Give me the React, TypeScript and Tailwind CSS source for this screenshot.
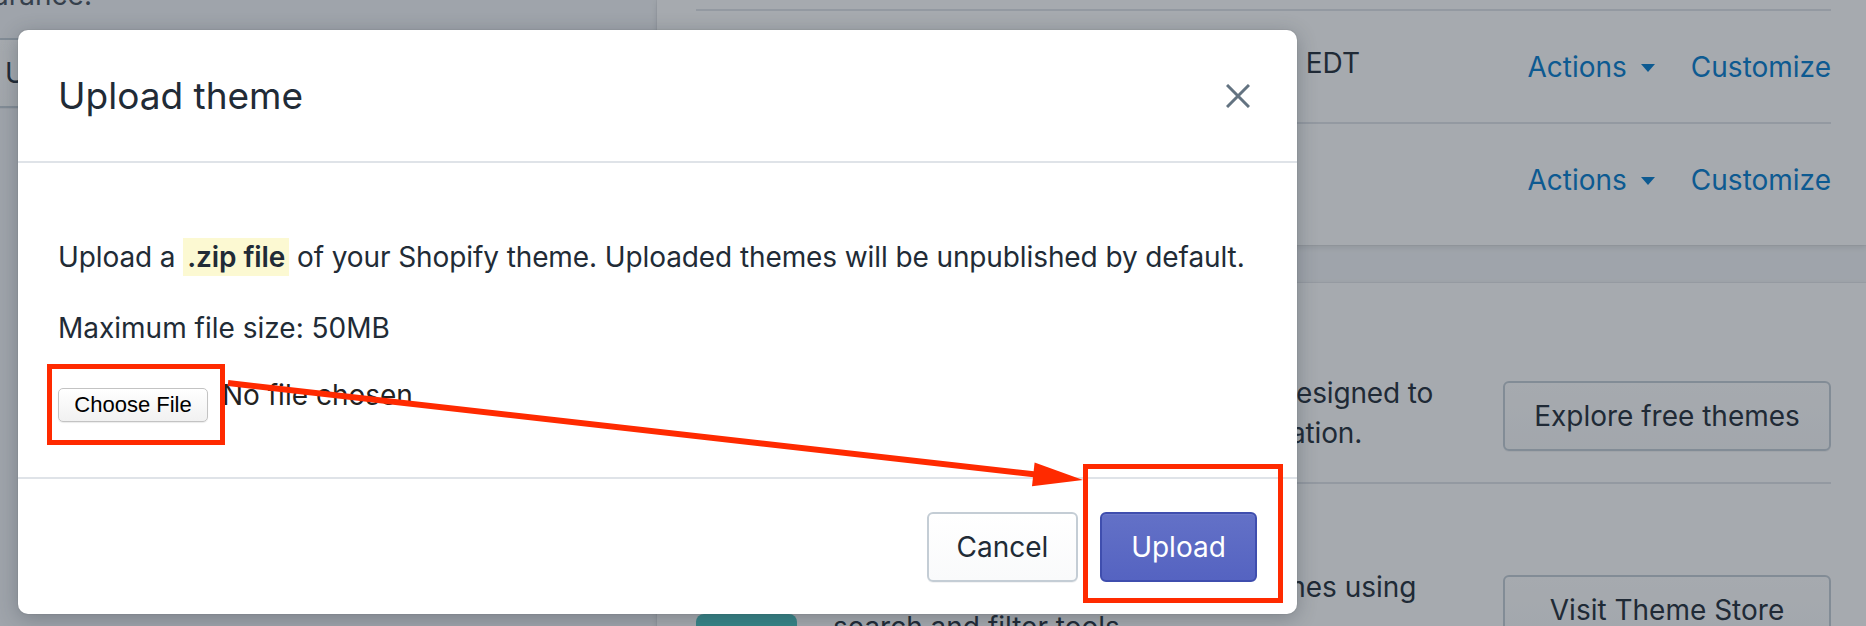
import React from "react";

function Caret() {
  return (
    <svg width="14" height="8" viewBox="0 0 14 8" className="ml-[14px] mt-[2px]">
      <path d="M0 0 L14 0 L7 8 Z" fill="currentColor" />
    </svg>
  );
}

function ThemeActions() {
  return (
    <div className="ml-auto flex items-center text-[#007ace] whitespace-nowrap">
      <span>Actions</span>
      <Caret />
      <span className="ml-[36px]">Customize</span>
    </div>
  );
}

const secondaryBtn =
  "border-2 border-[#c4cdd5] rounded-[6px] bg-gradient-to-b from-white to-[#f9fafb] text-[#212b36] whitespace-nowrap shadow-[0_1px_0_0_rgba(22,29,37,0.05)]";

export default function App() {
  return (
    <div className="relative w-[1866px] h-[626px] overflow-hidden bg-[#f4f6f8] text-[#212b36] font-['Inter','Noto_Sans',sans-serif] text-[28px] leading-[40px]">
      {/* page behind the modal */}
      <div className="flex h-full">
        <div className="w-[657px] shrink-0 flex flex-col items-start">
          <div className="-mt-[25px] w-[92px] flex justify-end overflow-hidden whitespace-nowrap text-[#454f5b]">
            <span>Add and publish themes to change your online store's appearance.</span>
          </div>
          <button className={"mt-[23px] -ml-[29px] h-[70px] px-[32px] " + secondaryBtn}>Upload theme</button>
        </div>

        <div className="flex-1 flex flex-col min-w-0">
          <div className="bg-white pl-[39px] pr-[35px] pb-[9px] shadow-[0_0_0_1px_rgba(63,63,68,0.05),0_2px_6px_0_rgba(63,63,68,0.15)]">
            <div className="h-[11px] border-b-2 border-[#dfe3e8]" />
            <div className="h-[113px] border-b-2 border-[#dfe3e8] flex items-center">
              <div className="w-[664px] text-right whitespace-nowrap mb-[8px]">Last saved: Jun 12 at 2:47pm EDT</div>
              <ThemeActions />
            </div>
            <div className="h-[112px] flex items-center">
              <div className="pl-[137px] whitespace-nowrap font-semibold">Debut</div>
              <ThemeActions />
            </div>
          </div>

          <div className="h-[38px] shrink-0" />

          <div className="bg-white flex-1 pl-[39px] pr-[35px] shadow-[0_0_0_1px_rgba(63,63,68,0.05),0_2px_6px_0_rgba(63,63,68,0.15)]">
            <div className="h-[201px] border-b-2 border-[#dfe3e8] pt-[50px] flex items-start">
              <div className="w-[101px] shrink-0" />
              <div className="ml-[36px] flex-1 min-w-0 whitespace-nowrap tracking-[-0.15px]">
                <div className="font-semibold">Free themes</div>
                <div>
                  Explore Shopify's free themes, all designed to
                  <br />
                  offer the best home page customization.
                </div>
              </div>
              <button className={"mt-[48px] w-[328px] h-[70px] shrink-0 " + secondaryBtn}>Explore free themes</button>
            </div>
            <div className="pt-[43px] flex items-start">
              <div className="w-[101px] shrink-0 mt-[87px] h-[80px] rounded-t-[8px] bg-[#47c1bf]" />
              <div className="ml-[36px] flex-1 min-w-0 whitespace-nowrap">
                <div className="font-semibold">Shopify Theme Store</div>
                <div>
                  Browse free and selling-ready themes using
                  <br />
                  search and filter tools.
                </div>
              </div>
              <button className={"mt-[48px] w-[328px] h-[70px] shrink-0 " + secondaryBtn}>Visit Theme Store</button>
            </div>
          </div>
        </div>
      </div>

      {/* backdrop + modal */}
      <div className="absolute inset-0 bg-[rgba(33,43,54,0.4)] pl-[18px] pt-[30px]">
        <div className="w-[1279px] h-[584px] bg-white rounded-[10px] shadow-[0_0_0_1px_rgba(63,63,68,0.05),0_4px_20px_0_rgba(33,43,54,0.3)] flex flex-col overflow-hidden">
          <div className="h-[133px] shrink-0 border-b-2 border-[#dfe3e8] pl-[40px] pr-[47px] flex items-center justify-between">
            <h2 className="text-[37px] leading-[48px] font-normal">Upload theme</h2>
            <svg width="24" height="24" viewBox="0 0 24 24" className="text-[#637381]">
              <path d="M1 1 L23 23 M23 1 L1 23" stroke="currentColor" strokeWidth="3" />
            </svg>
          </div>
          <div className="h-[314px] shrink-0 px-[40px] pt-[74px]">
            <p className="whitespace-nowrap tracking-[-0.1px]">
              Upload a <span className="font-semibold bg-[#fcf9d2] px-[4px] py-[2px]">.zip file</span> of your Shopify theme. Uploaded themes will be unpublished by default.
            </p>
            <p className="mt-[31px]">Maximum file size: 50MB</p>
            <div className="mt-[40px] flex items-start">
              <button className="h-[34px] w-[150px] border border-[#c3c3c3] rounded-[5px] bg-gradient-to-b from-white to-[#f1f1f1] text-[22px] leading-[32px] text-black shadow-[0_1px_1px_rgba(0,0,0,0.08)] font-['Liberation_Sans','Inter',sans-serif]">
                Choose File
              </button>
              <span className="ml-[14px] -mt-[13px] text-[#222]">No file chosen</span>
            </div>
          </div>
          <div className="flex-1 border-t-2 border-[#dfe3e8] flex items-center justify-end gap-[22px] pr-[40px]">
            <button className={"w-[151px] h-[70px] " + secondaryBtn}>Cancel</button>
            <button className="w-[157px] h-[70px] rounded-[6px] border-2 border-[#3f4eae] bg-gradient-to-b from-[#6371c7] to-[#5563c1] text-white shadow-[inset_0_1px_0_0_#6f7bcb]">
              Upload
            </button>
          </div>
        </div>
      </div>

      {/* annotations */}
      <svg className="absolute inset-0 pointer-events-none" width="1866" height="626" viewBox="0 0 1866 626">
        <rect x="49.5" y="366.5" width="173" height="76" fill="none" stroke="#ff2a00" strokeWidth="5" />
        <rect x="1085.5" y="466.5" width="195" height="134" fill="none" stroke="#ff2a00" strokeWidth="5" />
        <line x1="228" y1="383" x2="1036" y2="474.6" stroke="#ff2a00" strokeWidth="6" />
        <polygon points="1083,480 1034.6,462.5 1032,486.3" fill="#ff2a00" />
      </svg>
    </div>
  );
}
